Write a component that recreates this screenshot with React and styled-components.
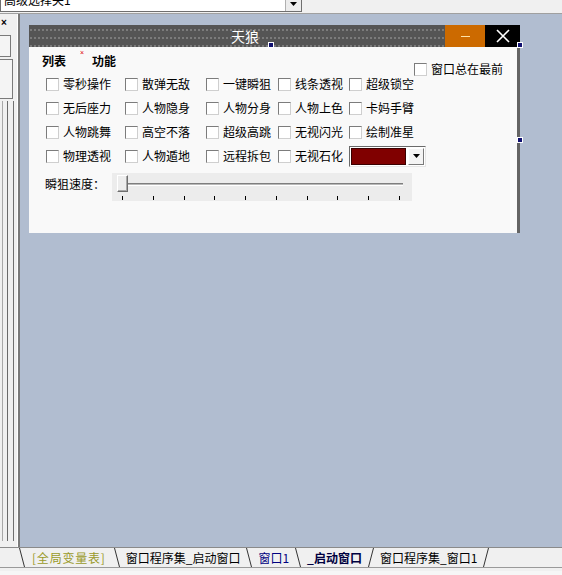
import React from "react";
import styled, { createGlobalStyle } from "styled-components";

const GlobalStyle = createGlobalStyle`
  html, body { margin: 0; padding: 0; }
  body {
    background: #f0f0f0;
    font-family: "Noto Sans CJK SC", "Liberation Sans", sans-serif;
    font-size: 12px;
    color: #000;
  }
`;

const Screen = styled.div`
  width: 562px;
  height: 575px;
  display: flex;
  flex-direction: column;
  overflow: hidden;
  background: #f0f0f0;
`;

// top: the half-hidden combo box of the IDE
const TopBar = styled.div`
  height: 14px;
  flex: none;
  display: flex;
  align-items: flex-end;
  overflow: hidden;
  border-bottom: 1px solid #a0a0a0;
  box-sizing: border-box;
`;

const Combo = styled.div`
  width: 302px;
  height: 20px;
  flex: none;
  display: flex;
  box-sizing: border-box;
  border: 1px solid #6f6f6f;
  border-top: none;
  background: #fff;
  margin-bottom: 1px;
`;

const ComboText = styled.div`
  flex: 1;
  padding-left: 3px;
  line-height: 16px;
  font-size: 12px;
`;

const ComboArrow = styled.div`
  width: 16px;
  flex: none;
  border-left: 1px solid #b0b0b0;
  background: #ececec;
  display: flex;
  align-items: center;
  justify-content: center;
  padding-top: 5px;
  box-sizing: border-box;
`;

const Main = styled.div`
  height: 533px;
  flex: none;
  display: flex;
`;

const Sidebar = styled.div`
  width: 17px;
  flex: none;
  display: flex;
  flex-direction: column;
  border-right: 1px solid #fff;
`;

const SideClose = styled.div`
  height: 20px;
  padding-top: 2px;
  box-sizing: border-box;
  font-size: 10px;
  font-weight: 700;
  line-height: 14px;
  padding-left: 1px;
  font-family: "Liberation Sans", sans-serif;
`;

const SideBox = styled.div`
  margin-top: ${({ $top }) => $top || 0}px;
  height: ${({ $h }) => $h}px;
  width: ${({ $w }) => $w || 10}px;
  border: 1px solid #7a7a7a;
  border-left: none;
  box-sizing: border-box;
  background: #f4f4f4;
`;

const SideRail = styled.div`
  flex: 1;
  margin-top: 2px;
  margin-bottom: 6px;
  display: flex;
  gap: 4px;
  padding-left: 2px;
  border-right: 1px solid #707070;
  width: 14px;
  box-sizing: border-box;
`;

const RailLine = styled.div`
  width: 1px;
  background: ${({ $c }) => $c};
`;

const Canvas = styled.div`
  flex: 1;
  background: #b1bdd0;
  border-left: 2px solid #7a7a7a;
  padding: 11px 0 0 9px;
`;

const Form = styled.div`
  position: relative;
  width: 491px;
  display: flex;
  flex-direction: column;
`;

const TitleBar = styled.div`
  height: 22px;
  display: flex;
`;

const Title = styled.div`
  flex: 1;
  background-color: #555;
  background-image: radial-gradient(circle, #7b7b7b 0.9px, transparent 1.2px);
  background-size: 4px 8px;
  background-position: 0 1px;
  color: #fff;
  font-size: 14px;
  line-height: 22px;
  text-align: center;
  padding-left: 16px;
`;

const MinBtn = styled.div`
  width: 40px;
  background: #cc6a00;
  display: flex;
  align-items: center;
  justify-content: center;
  &::after {
    content: "";
    width: 9px;
    height: 1px;
    background: #ffe2a8;
  }
`;

const CloseBtn = styled.div`
  width: 35px;
  background: #000;
  display: flex;
  align-items: center;
  justify-content: center;
`;

const Body = styled.div`
  height: 186px;
  background: #f9f9f9;
  border-right: 3px solid #646464;
  display: flex;
  flex-direction: column;
  padding-left: 13px;
`;

const Header = styled.div`
  height: 18px;
  margin-top: 7px;
  display: flex;
  align-items: flex-start;
  padding-right: 14px;
`;

const TabLabel = styled.div`
  font-weight: 700;
  line-height: 14px;
  margin-right: 26px;
`;

const Grid = styled.div`
  display: grid;
  grid-template-columns: 79px 81px 72px 71px auto;
  grid-auto-rows: 24px;
  align-items: center;
  margin-left: 4px;
`;

const Check = styled.label`
  display: flex;
  align-items: center;
  gap: 4px;
  white-space: nowrap;
  line-height: 14px;
  margin-left: ${({ $push }) => ($push ? "auto" : "0")};
  margin-top: ${({ $push }) => ($push ? "8px" : "0")};
`;

const Box = styled.span`
  width: 13px;
  height: 13px;
  flex: none;
  box-sizing: border-box;
  background: #fff;
  border: 1px solid;
  border-color: #7c7c7c #cfcfcf #cfcfcf #7c7c7c;
`;

const ColorPick = styled.div`
  width: 77px;
  height: 21px;
  box-sizing: border-box;
  display: flex;
  gap: 2px;
  border: 1px solid;
  border-color: #6a6a6a #e6e6e6 #e6e6e6 #6a6a6a;
  padding: 1px;
  background: #fff;
`;

const Swatch = styled.div`
  width: 55px;
  background: #800000;
  border: 1px solid #3a0000;
  box-sizing: border-box;
`;

const PickArrow = styled.div`
  flex: 1;
  background: #f4f4f4;
  border: 1px solid;
  border-color: #fff #7a7a7a #7a7a7a #fff;
  display: flex;
  align-items: center;
  justify-content: center;
`;

const SpeedRow = styled.div`
  display: flex;
  margin-top: 5px;
`;

const SpeedLabel = styled.div`
  width: 70px;
  line-height: 22px;
  padding-left: 3px;
  box-sizing: border-box;
  flex: none;
`;

const Slider = styled.div`
  width: 300px;
  height: 28px;
  background: #ececec;
  display: flex;
  flex-direction: column;
`;

const TrackArea = styled.div`
  position: relative;
  height: 22px;
`;

const Track = styled.div`
  margin: 10px 9px 0 11px;
  height: 1px;
  border-top: 1px solid #7e7e7e;
  border-bottom: 1px solid #fff;
  background: #b8b8b8;
`;

const Thumb = styled.div`
  position: absolute;
  left: 5px;
  top: 2px;
  width: 11px;
  height: 17px;
  box-sizing: border-box;
  background: #ededed;
  border: 1px solid;
  border-color: #fff #6e6e6e #6e6e6e #fff;
  box-shadow: inset -1px -1px 0 #a8a8a8;
`;

const Ticks = styled.div`
  display: flex;
  justify-content: space-between;
  width: 278px;
  margin-left: 10px;
  padding-top: 1px;
`;

const Tick = styled.span`
  width: 1px;
  height: 4px;
  background: #000;
`;

const Handle = styled.span`
  position: absolute;
  left: ${({ $x }) => $x}px;
  top: ${({ $y }) => $y}px;
  width: 6px;
  height: 6px;
  box-sizing: border-box;
  background: #101070;
  border: 1px solid #fff;
`;

const RedMark = styled.span`
  position: absolute;
  left: 51px;
  top: 24px;
  color: #e00000;
  font-size: 7px;
  line-height: 7px;
  font-family: "Liberation Sans", sans-serif;
`;

// bottom tabs of the IDE
const TabBar = styled.div`
  height: 21px;
  flex: none;
  display: flex;
  align-items: stretch;
  padding-left: 19px;
  border-top: 1px solid #8a8a8a;
  border-bottom: 1px solid #9a9a9a;
  box-sizing: border-box;
  background: #f0f0f0;
`;

const IdeTab = styled.div`
  padding: ${({ $wide }) => ($wide ? "0 8px 0 7px" : "0 6px")};
  line-height: 19px;
  white-space: nowrap;
  color: ${({ $color }) => $color || "#000"};
  font-weight: ${({ $active }) => ($active ? 700 : 400)};
  letter-spacing: ${({ $wide }) => ($wide ? "0.8px" : "0")};
`;

const Footer = styled.div`
  flex: 1;
  background: #f6f6f6;
  border-top: 3px solid #f0f0f0;
`;

function Sep({ back }) {
  return (
    <svg width="6" height="19" style={{ flex: "none" }}>
      {back ? (
        <line x1="0.5" y1="0" x2="5.5" y2="19" stroke="#333" strokeWidth="1" />
      ) : (
        <line x1="5.5" y1="0" x2="0.5" y2="19" stroke="#333" strokeWidth="1" />
      )}
    </svg>
  );
}

const rows = [
  ["零秒操作", "散弹无敌", "一键瞬狙", "线条透视", "超级锁空"],
  ["无后座力", "人物隐身", "人物分身", "人物上色", "卡妈手臂"],
  ["人物跳舞", "高空不落", "超级高跳", "无视闪光", "绘制准星"],
  ["物理透视", "人物遁地", "远程拆包", "无视石化"],
];

function Arrow() {
  return (
    <svg width="7" height="4">
      <polygon points="0,0 7,0 3.5,4" fill="#000" />
    </svg>
  );
}

export default function App() {
  return (
    <Screen>
      <GlobalStyle />
      <TopBar>
        <Combo>
          <ComboText>高级选择夹1</ComboText>
          <ComboArrow>
            <Arrow />
          </ComboArrow>
        </Combo>
      </TopBar>

      <Main>
        <Sidebar>
          <SideClose>×</SideClose>
          <SideBox $top={1} $h={22} $w={11} />
          <SideBox $top={2} $h={40} $w={13} />
          <SideRail>
            <RailLine $c="#a8a8a8" />
            <RailLine $c="#6a6a6a" />
          </SideRail>
        </Sidebar>

        <Canvas>
          <Form>
            <TitleBar>
              <Title>天狼</Title>
              <MinBtn />
              <CloseBtn>
                <svg width="14" height="14">
                  <path d="M1 1 L13 13 M13 1 L1 13" stroke="#fff" strokeWidth="1.6" />
                </svg>
              </CloseBtn>
            </TitleBar>
            <Body>
              <Header>
                <TabLabel>列表</TabLabel>
                <TabLabel>功能</TabLabel>
                <Check $push>
                  <Box />
                  窗口总在最前
                </Check>
              </Header>
              <Grid>
                {rows.map((row) =>
                  row.map((name) => (
                    <Check key={name}>
                      <Box />
                      {name}
                    </Check>
                  ))
                )}
                <ColorPick>
                  <Swatch />
                  <PickArrow>
                    <Arrow />
                  </PickArrow>
                </ColorPick>
              </Grid>
              <SpeedRow>
                <SpeedLabel>瞬狙速度：</SpeedLabel>
                <Slider>
                  <TrackArea>
                    <Track />
                    <Thumb />
                  </TrackArea>
                  <Ticks>
                    {Array.from({ length: 10 }, (_, i) => (
                      <Tick key={i} />
                    ))}
                  </Ticks>
                </Slider>
              </SpeedRow>
            </Body>
            <RedMark>×</RedMark>
            <Handle $x={239} $y={17} />
            <Handle $x={488} $y={17} />
            <Handle $x={488} $y={112} />
          </Form>
        </Canvas>
      </Main>

      <TabBar>
        <Sep back />
        <IdeTab $wide $color="#9a9a2a">[全局变量表]</IdeTab>
        <Sep back />
        <IdeTab>窗口程序集_启动窗口</IdeTab>
        <Sep back />
        <IdeTab $color="#000080">窗口1</IdeTab>
        <Sep back />
        <IdeTab $active $color="#000040">_启动窗口</IdeTab>
        <Sep />
        <IdeTab>窗口程序集_窗口1</IdeTab>
        <Sep />
      </TabBar>
      <Footer />
    </Screen>
  );
}
